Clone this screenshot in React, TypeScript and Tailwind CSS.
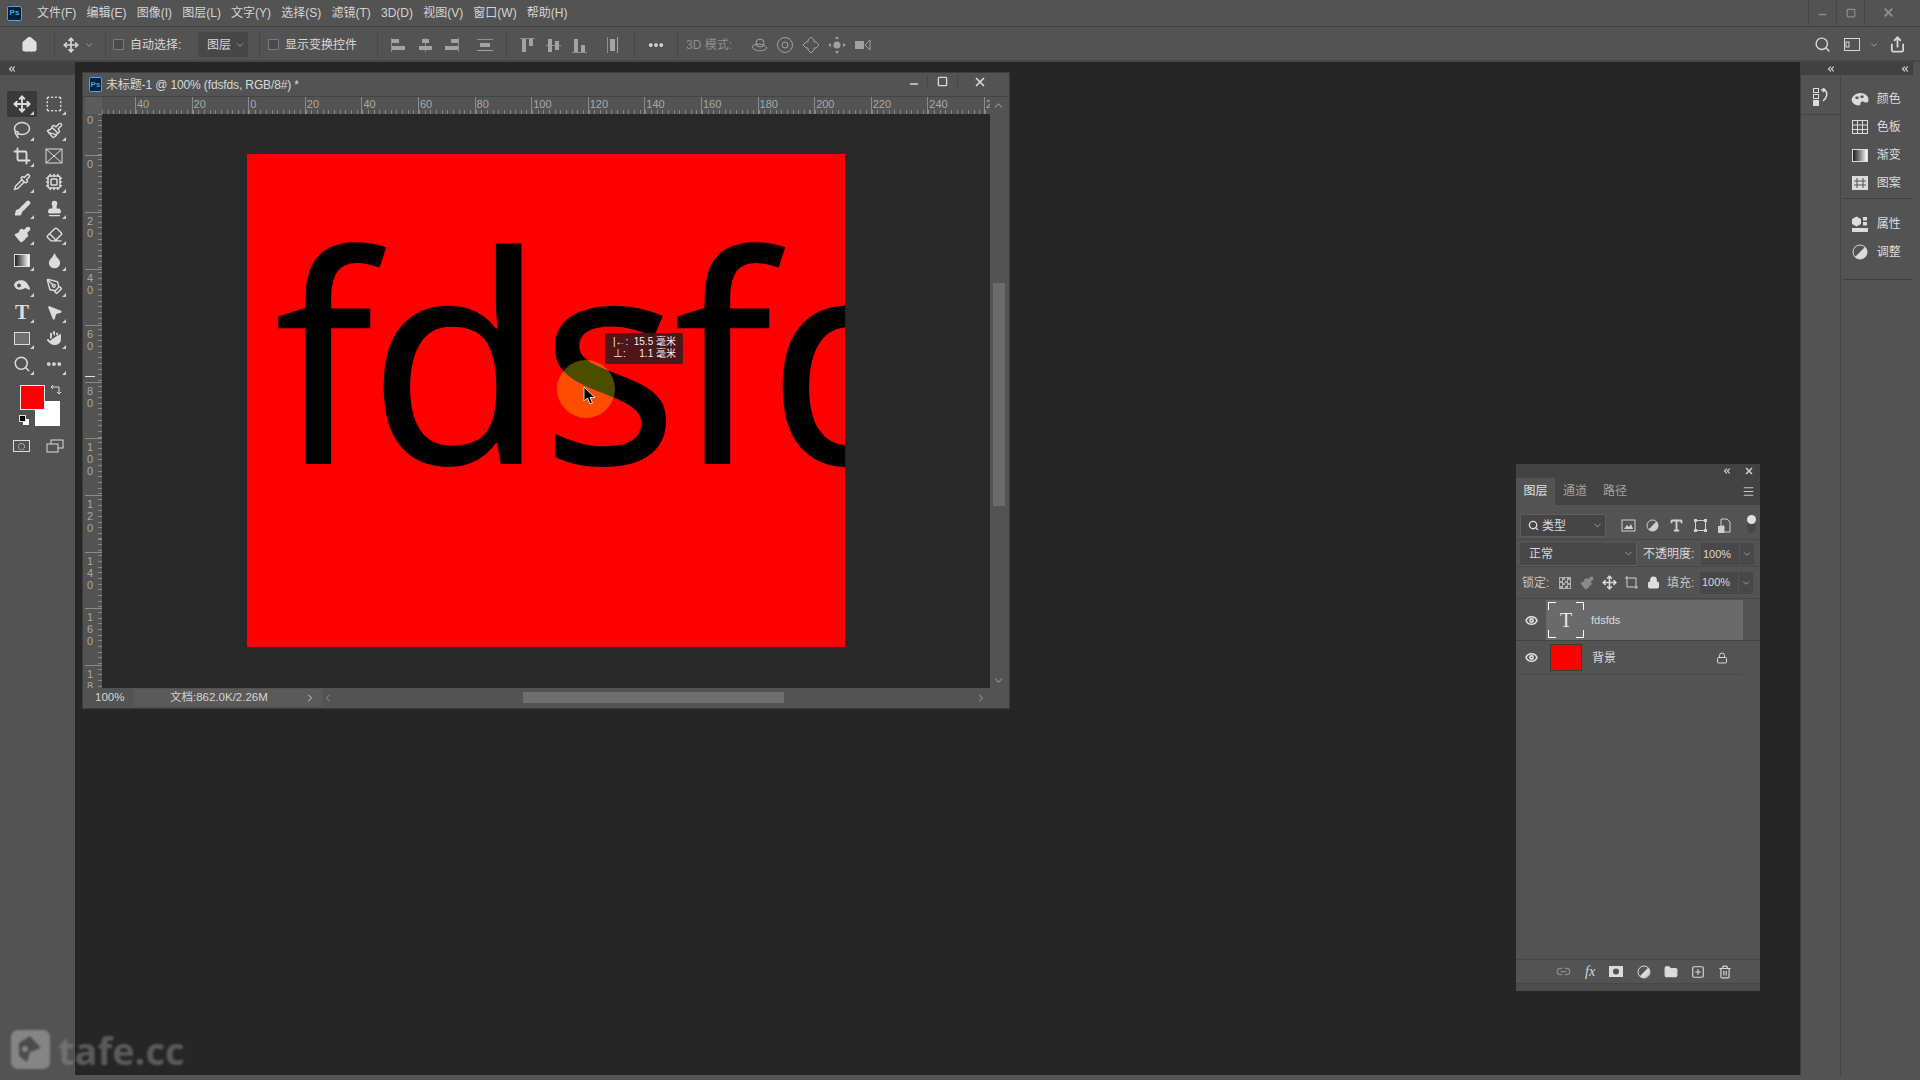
import React from 'react';
import {
  Brush, Crop, Cpu, Droplet, Ellipsis, Eraser, Eye, FolderClosed, Hand, Home, Lasso, Link2, Lock, Menu,
  Move, MousePointer2, PenTool, Pipette, Search, Share, SquareDashed, SquarePlus, Stamp, Trash2, Type, X,
  ChevronDown, ChevronRight, ChevronLeft, ChevronUp, ChevronsLeft, Minus, Square, Paintbrush,
} from 'lucide-react';

const cjk = "font-['Liberation_Sans','Noto_Sans_CJK_SC',sans-serif]";

const menuItems = ['文件(F)', '编辑(E)', '图像(I)', '图层(L)', '文字(Y)', '选择(S)', '滤镜(T)', '3D(D)', '视图(V)', '窗口(W)', '帮助(H)'];
const topRulerLabels = ['40', '20', '0', '20', '40', '60', '80', '100', '120', '140', '160', '180', '200', '220', '240', '2'];
const sideRulerLabels = ['20', '40', '60', '80', '100', '120', '140', '160', '180'];

function PsLogo({ size = 'w-[15px] h-[15px]' }: { size?: string }) {
  return (
    <div className={`${size} bg-[#001e36] border border-[#31a8ff] rounded-[2px] flex items-center justify-center text-[8px] leading-none font-bold text-[#31a8ff]`}>
      Ps
    </div>
  );
}

function Sep({ className = '' }: { className?: string }) {
  return <div className={`w-px h-[25px] bg-[#474747] ${className}`} />;
}

// align icons in the options bar: 16x16 with bars
function AlignIcon({ bars, line }: { bars: number[][]; line: number[] }) {
  return (
    <svg width="18" height="18" viewBox="0 0 18 18" className="shrink-0">
      <rect x={line[0]} y={line[1]} width={line[2]} height={line[3]} fill="#8f8f8f" />
      {bars.map((b, i) => (
        <rect key={i} x={b[0]} y={b[1]} width={b[2]} height={b[3]} fill="#a3a3a3" />
      ))}
    </svg>
  );
}

function Corner() {
  return (
    <svg width="4" height="4" viewBox="0 0 4 4" className="absolute right-[3px] bottom-[2px]">
      <path d="M4 0V4H0Z" fill="#cfcfcf" />
    </svg>
  );
}

function Tool({ children, active, corner = true }: { children: React.ReactNode; active?: boolean; corner?: boolean }) {
  return (
    <div className={`relative w-[30px] h-[26px] flex items-center justify-center text-[#dcdcdc] ${active ? 'bg-[#3a3a3a]' : ''}`}>
      {children}
      {corner && <Corner />}
    </div>
  );
}

function TopRuler() {
  return (
    <div className="h-[17px] flex flex-1 overflow-hidden bg-[#535353] bg-[repeating-linear-gradient(90deg,#858585_0,#858585_1px,transparent_1px,transparent_5.66px)] bg-[length:100%_4px] bg-bottom bg-no-repeat">
      <div className="w-[33px] shrink-0" />
      {topRulerLabels.map((label, i) => (
        <div key={i} className="w-[56.6px] shrink-0 border-l border-[#8a8a8a] pl-[1px] text-[11px] leading-[15px] text-[#a8a8a8] font-['Liberation_Sans',sans-serif]">
          {label}
        </div>
      ))}
    </div>
  );
}

function SideRuler() {
  return (
    <div className="relative w-[17px] shrink-0 overflow-hidden bg-[#535353] bg-[repeating-linear-gradient(180deg,#858585_0,#858585_1px,transparent_1px,transparent_5.66px)] bg-[length:4px_100%] bg-right bg-no-repeat">
      <div className="h-[41px] pl-[2px] text-[11px] leading-[12px] text-[#a8a8a8] font-['Liberation_Sans',sans-serif]">0</div>
      <div className="h-[57px] border-t border-[#8a8a8a] pl-[2px] pt-[2px] text-[11px] leading-[12px] text-[#a8a8a8] font-['Liberation_Sans',sans-serif]">0</div>
      {sideRulerLabels.map((label, i) => (
        <div key={i} className="h-[56.6px] border-t border-[#8a8a8a] pl-[2px] pt-[2px] text-[11px] leading-[12px] text-[#a8a8a8] font-['Liberation_Sans',sans-serif]">
          {label.split('').map((d, j) => (
            <div key={j}>{d}</div>
          ))}
        </div>
      ))}
      <div className="absolute left-0 top-[262px] w-[10px] h-px bg-[#e0e0e0]" />
    </div>
  );
}

function DockItem({ icon, label }: { icon: React.ReactNode; label: string }) {
  return (
    <div className="h-[28px] flex items-center text-[#dcdcdc]">
      <div className="w-[34px] flex justify-center">{icon}</div>
      <span className="text-[12px]">{label}</span>
    </div>
  );
}

function DocumentWindow() {
  return (
    <div className={`absolute left-[82px] top-[72px] w-[928px] h-[637px] bg-[#535353] border border-[#3c3c3c] flex flex-col ${cjk}`}>
      {/* title bar */}
      <div className="h-[24px] flex items-center pl-[6px] border-b border-[#434343]">
        <PsLogo size="w-[13px] h-[15px]" />
        <span className="ml-[4px] text-[12px] tracking-[-0.13px] text-[#d8d8d8]">未标题-1 @ 100% (fdsfds, RGB/8#) *</span>
        <div className="ml-auto flex items-center h-[17px] self-start text-[#d6d6d6]">
          <div className="w-[26px] flex justify-center pt-[4px]"><Minus size={12} strokeWidth={3} /></div>
          <div className="w-[30px] flex justify-center border-l border-[#474747]"><Square size={11} strokeWidth={3} /></div>
          <div className="w-[44px] flex justify-center border-l border-[#474747]"><X size={14} strokeWidth={3} /></div>
          <div className="w-[8px]" />
        </div>
      </div>
      <div className="flex flex-1 min-h-0">
        <div className="flex flex-col flex-1 min-w-0 pl-[2px]">
          <div className="flex">
            <div className="w-[17px] h-[17px] bg-[#5c5c5c]" />
            <TopRuler />
          </div>
          <div className="flex flex-1 min-h-0">
            <SideRuler />
            {/* canvas */}
            <div className="flex-1 bg-[#282828] pl-[145px] pt-[40px] overflow-hidden">
              <div className="relative w-[598px] h-[493px] bg-[#ff0000] overflow-hidden">
                <div className="absolute left-[27px] top-[25px] text-[290px] tracking-[-6px] leading-[345px] text-black whitespace-nowrap font-['Noto_Sans',sans-serif]">fdsfd</div>
              </div>
            </div>
          </div>
        </div>
        {/* vertical scrollbar */}
        <div className="w-[19px] shrink-0 flex flex-col items-center text-[#8a8a8a] pt-[2px] pb-[1px] pr-[2px]">
          <ChevronUp size={13} />
          <div className="h-[171px]" />
          <div className="w-[12px] h-[223px] bg-[#6b6b6b]" />
          <div className="flex-1" />
          <ChevronDown size={13} />
        </div>
      </div>
      {/* status bar */}
      <div className="h-[18px] mb-[2px] pt-[1px] flex items-center bg-[#535353] text-[11.5px] text-[#d4d4d4]">
        <span className="ml-[12px] w-[39px]">100%</span>
        <div className="h-full w-[188px] bg-[#5a5a5a] pl-[36px] flex items-center">文档:862.0K/2.26M</div>
        <ChevronRight size={12} className="ml-[-18px]" />
        <ChevronLeft size={12} className="ml-[6px] text-[#8a8a8a]" />
        <div className="ml-[189px] w-[261px] h-[11px] bg-[#6e6e6e]" />
        <div className="flex-1" />
        <ChevronRight size={12} className="mr-[22px] text-[#a0a0a0]" />
      </div>
      {/* cursor readout over the artboard */}
      <div className="absolute left-[474px] top-[287px] w-[58px] h-[58px] rounded-full bg-[#ffff00]/30" />
      <svg width="14" height="20" viewBox="0 0 14 20" className="absolute left-[500px] top-[313px]">
        <path d="M1 1V15L4.5 12L7 18L9.5 17L7 11.5H12Z" fill="#000" stroke="#fff" strokeWidth="0.8" />
      </svg>
      <div className="absolute left-[522px] top-[260px] w-[78px] h-[31px] rounded-[2px] bg-[#3b1818]/90 text-[10px] leading-[12px] text-[#f0f0f0] pl-[8px] pr-[7px] pt-[3px]">
        <div className="flex justify-between"><span>|←:</span><span>15.5 毫米</span></div>
        <div className="flex justify-between"><span>⊥:</span><span>1.1 毫米</span></div>
      </div>
    </div>
  );
}

function LayersPanel() {
  const iconClass = 'text-[#d0d0d0]';
  return (
    <div className={`absolute left-[1516px] top-[464px] w-[244px] h-[527px] bg-[#535353] flex flex-col ${cjk}`}>
      <div className="h-[14px] bg-[#424242] flex items-center justify-end gap-[12px] pr-[6px] text-[#c8c8c8]">
        <ChevronsLeft size={10} strokeWidth={3} />
        <X size={10} strokeWidth={4} />
      </div>
      <div className="h-[27px] bg-[#434343] flex items-center text-[12px] text-[#a2a2a2] pr-[5px]">
        <div className="w-[39px] h-full pb-[2px] bg-[#535353] flex items-center justify-center text-[#e0e0e0]">图层</div>
        <div className="w-[40px] pb-[2px] text-center">通道</div>
        <div className="w-[40px] pb-[2px] text-center">路径</div>
        <Menu size={13} className="ml-auto text-[#c8c8c8]" />
      </div>
      {/* filter */}
      <div className="h-[35px] flex items-center pl-[4px] pt-[7px] border-b border-[#484848]">
        <div className="w-[86px] h-[23px] bg-[#454545] border border-[#5e5e5e] rounded-[1px] flex items-center pl-[7px] text-[12px] text-[#dcdcdc]">
          <Search size={11} strokeWidth={3} />
          <span className="ml-[3px]">类型</span>
          <ChevronDown size={11} className="ml-auto mr-[2px] text-[#a0a0a0]" />
        </div>
        <div className={`ml-[15px] flex items-center gap-[9px] ${iconClass}`}>
          <svg width="15" height="13" viewBox="0 0 15 13"><rect x="1" y="1" width="13" height="11" fill="none" stroke="#d0d0d0" /><path d="M3 10L6 6L8 8L10 5L12 10Z" fill="#d0d0d0" /></svg>
          <svg width="15" height="15" viewBox="0 0 15 15"><circle cx="7.5" cy="7.5" r="5.5" fill="#555" stroke="#d0d0d0" /><path d="M11.4 3.6A5.5 5.5 0 0 1 3.6 11.4Z" fill="#d0d0d0" /></svg>
          <Type size={15} strokeWidth={3} />
          <svg width="15" height="15" viewBox="0 0 15 15"><rect x="2.5" y="2.5" width="10" height="10" fill="none" stroke="#d0d0d0" /><rect x="1" y="1" width="3" height="3" fill="#d0d0d0" /><rect x="11" y="1" width="3" height="3" fill="#d0d0d0" /><rect x="1" y="11" width="3" height="3" fill="#d0d0d0" /><rect x="11" y="11" width="3" height="3" fill="#d0d0d0" /></svg>
          <svg width="14" height="16" viewBox="0 0 14 16"><path d="M4 1H10L13 4V14H7V8H4Z" fill="none" stroke="#d0d0d0" /><rect x="1" y="8" width="6" height="7" fill="#d0d0d0" /></svg>
        </div>
        <div className="ml-[16px] mb-[4px] flex flex-col items-center">
          <div className="w-[9px] h-[9px] rounded-full bg-[#e0e0e0]" />
          <div className="w-[9px] h-[9px] rounded-b-full bg-[#474747]" />
        </div>
      </div>
      {/* blend mode */}
      <div className="h-[27px] flex items-center pl-[4px] pt-[2px] border-b border-[#484848] text-[12px] text-[#d8d8d8]">
        <div className="w-[117px] h-[23px] bg-[#484848] border-b border-r border-[#5e5e5e] flex items-center pl-[9px]">
          正常
          <ChevronDown size={11} className="ml-auto mr-[2px] text-[#a0a0a0]" />
        </div>
        <span className="ml-[6px] w-[58px] whitespace-nowrap">不透明度:</span>
        <div className="w-[38px] h-[22px] bg-[#484848] flex items-center pl-[2px] text-[11px]">100%</div>
        <div className="ml-[1px] w-[14px] h-[22px] bg-[#484848] flex items-center justify-center"><ChevronDown size={10} className="text-[#a8a8a8]" /></div>
      </div>
      {/* lock */}
      <div className="h-[32px] flex items-center pl-[6px] border-b border-[#484848] text-[12px] text-[#c4c4c4]">
        <span className="w-[37px]">锁定:</span>
        <div className="w-[12px] h-[12px] border border-[#b0b0b0] bg-[repeating-conic-gradient(#b0b0b0_0_25%,#555_0_50%)] bg-[length:5px_5px]" />
        <Paintbrush size={14} className="ml-[9px] text-[#8a8a8a]" fill="#8a8a8a" />
        <Move size={15} className="ml-[8px] text-[#d8d8d8]" strokeWidth={2.5} />
        <svg width="15" height="15" viewBox="0 0 15 15" className="ml-[7px]"><path d="M3 1V12H14M1 3H12V14" fill="none" stroke="#d0d0d0" /></svg>
        <Lock size={13} className="ml-[8px] text-[#e0e0e0]" fill="#e0e0e0" />
        <span className="ml-[7px] w-[33px]">填充:</span>
        <div className="w-[38px] h-[22px] bg-[#484848] flex items-center pl-[2px] text-[11px] text-[#d8d8d8]">100%</div>
        <div className="ml-[1px] w-[14px] h-[22px] bg-[#484848] flex items-center justify-center"><ChevronDown size={10} className="text-[#a8a8a8]" /></div>
      </div>
      {/* layer rows */}
      <div className="h-[41px] flex items-center border-b border-[#434343] mt-[1px]">
        <div className="w-[30px] flex justify-center"><Eye size={13} strokeWidth={3} className="text-[#e0e0e0]" /></div>
        <div className="w-[197px] h-full bg-[#6a6a6a] flex items-center pl-[2px]">
          <div className="relative w-[36px] h-[36px] flex items-center justify-center text-[#e8e8e8]">
            <div className="absolute left-0 top-0 w-[8px] h-[8px] border-l border-t border-white" />
            <div className="absolute right-0 top-0 w-[8px] h-[8px] border-r border-t border-white" />
            <div className="absolute left-0 bottom-0 w-[8px] h-[8px] border-l border-b border-white" />
            <div className="absolute right-0 bottom-0 w-[8px] h-[8px] border-r border-b border-white" />
            <span className="text-[20px] font-['Liberation_Serif',serif] leading-none">T</span>
          </div>
          <span className="ml-[7px] text-[11px] text-[#dcdcdc]">fdsfds</span>
        </div>
      </div>
      <div className="h-[34px] flex items-center border-b border-[#4a4a4a] w-[227px]">
        <div className="w-[30px] flex justify-center"><Eye size={13} strokeWidth={3} className="text-[#e0e0e0]" /></div>
        <div className="w-[32px] h-[27px] ml-[4px] bg-[#ff0000] border border-[#3a3a3a]" />
        <span className="ml-[10px] text-[12px] text-[#dcdcdc]">背景</span>
        <Lock size={12} className="ml-auto mr-[15px] text-[#d8d8d8]" />
      </div>
      <div className="flex-1" />
      {/* footer */}
      <div className="h-[24px] border-t border-[#474747] flex items-center pl-[40px] text-[#d8d8d8]">
        <Link2 size={15} className="text-[#8a8a8a]" />
        <span className="ml-[14px] w-[24px] text-[14px] italic font-['Liberation_Serif',serif]">fx</span>
        <svg width="14" height="11" viewBox="0 0 14 11"><path fillRule="evenodd" d="M0 0H14V11H0ZM7 2.5A3 3 0 1 0 7 8.5A3 3 0 1 0 7 2.5Z" fill="#dcdcdc" /></svg>
        <svg width="14" height="14" viewBox="0 0 14 14" className="ml-[14px]"><circle cx="7" cy="7" r="6" fill="#555" stroke="#dcdcdc" /><path d="M11.2 2.8A6 6 0 0 1 2.8 11.2Z" fill="#dcdcdc" /></svg>
        <FolderClosed size={14} fill="#dcdcdc" className="ml-[13px]" />
        <SquarePlus size={14} className="ml-[13px]" />
        <Trash2 size={14} className="ml-[13px]" />
      </div>
      <div className="h-[8px] border-t border-[#474747] bg-[#4c4c4c]" />
    </div>
  );
}

export default function App() {
  return (
    <div className={`relative w-[1920px] h-[1080px] overflow-hidden flex flex-col bg-[#262626] ${cjk}`}>
      {/* menu bar */}
      <div className="h-[27px] shrink-0 bg-[#535353] border-b border-[#404040] flex items-center pl-[7px] text-[12px] text-[#d4d4d4]">
        <PsLogo />
        <div className="ml-[15px] flex gap-[10.2px]">
          {menuItems.map((item) => (
            <span key={item}>{item}</span>
          ))}
        </div>
        <div className="ml-auto flex items-center h-full text-[#8c8c8c] border-b border-[#535353]">
          <div className="w-[28px] flex justify-center border-l border-[#474747] h-full items-center pt-[4px]"><Minus size={11} strokeWidth={3} /></div>
          <div className="w-[28px] flex justify-center border-l border-[#474747] h-full items-center"><Square size={10} strokeWidth={3} /></div>
          <div className="w-[47px] flex justify-center border-l border-[#474747] h-full items-center"><X size={13} strokeWidth={3.5} /></div>
          <div className="w-[9px]" />
        </div>
      </div>
      {/* options bar */}
      <div className="h-[35px] shrink-0 bg-[#535353] border-b-2 border-[#474747] pt-[2px] flex items-center text-[12px] text-[#d8d8d8]">
        <Home size={17} fill="#e0e0e0" className="ml-[21px] text-[#e0e0e0]" />
        <Sep className="ml-[16px]" />
        <Move size={16} className="ml-[8px] text-[#d8d8d8]" strokeWidth={2.5} />
        <ChevronDown size={10} className="ml-[5px] text-[#a8a8a8]" />
        <Sep className="ml-[11px]" />
        <div className="ml-[7px] w-[11px] h-[11px] border border-[#7c7c7c] bg-[#4a4a4a] rounded-[1px]" />
        <span className="ml-[6px] w-[68px] whitespace-nowrap">自动选择:</span>
        <div className="w-[50px] h-[25px] bg-[#474747] flex items-center pl-[9px]">
          图层
          <ChevronDown size={10} className="ml-auto mr-[3px] text-[#a8a8a8]" />
        </div>
        <Sep className="ml-[11px]" />
        <div className="ml-[8px] w-[11px] h-[11px] border border-[#7c7c7c] bg-[#4a4a4a] rounded-[1px]" />
        <span className="ml-[6px] w-[72px] whitespace-nowrap">显示变换控件</span>
        <Sep className="ml-[20px]" />
        <div className="ml-[12px]"><AlignIcon line={[1, 2, 1, 14]} bars={[[2, 3, 7, 4], [2, 10, 13, 4]]} /></div>
        <div className="ml-[9px]"><AlignIcon line={[8, 2, 1, 14]} bars={[[5, 3, 7, 4], [2, 10, 13, 4]]} /></div>
        <div className="ml-[7px]"><AlignIcon line={[16, 2, 1, 14]} bars={[[9, 3, 7, 4], [3, 10, 13, 4]]} /></div>
        <div className="ml-[16px]"><AlignIcon line={[1, 3, 16, 1]} bars={[[4, 7, 10, 4], [1, 14, 16, 1]]} /></div>
        <Sep className="ml-[12px]" />
        <div className="ml-[12px]"><AlignIcon line={[1, 2, 15, 1]} bars={[[3, 3, 4, 13], [10, 3, 4, 7]]} /></div>
        <div className="ml-[8px]"><AlignIcon line={[1, 9, 15, 1]} bars={[[3, 3, 4, 13], [10, 5, 4, 9]]} /></div>
        <div className="ml-[8px]"><AlignIcon line={[1, 16, 15, 1]} bars={[[3, 3, 4, 13], [10, 9, 4, 7]]} /></div>
        <div className="ml-[15px]"><AlignIcon line={[3, 1, 1, 16]} bars={[[6, 3, 5, 12], [13, 1, 1, 16]]} /></div>
        <Sep className="ml-[12px]" />
        <Ellipsis size={18} strokeWidth={3} className="ml-[12px] text-[#e0e0e0]" />
        <Sep className="ml-[12px]" />
        <span className="ml-[8px] w-[52px] text-[#8e8e8e] whitespace-nowrap">3D 模式:</span>
        <div className="ml-[12px] flex items-center gap-[8px] text-[#9c9c9c]">
          <svg width="18" height="18" viewBox="0 0 18 18" fill="none" stroke="#a0a0a0"><circle cx="10" cy="7" r="4" /><path d="M2 11C4 7 14 7 17 12C14 16 5 16 2 11Z" /></svg>
          <svg width="18" height="18" viewBox="0 0 18 18" fill="none" stroke="#a0a0a0"><circle cx="9" cy="9" r="7.5" /><circle cx="9" cy="9" r="3" /></svg>
          <svg width="18" height="18" viewBox="0 0 18 18" fill="none" stroke="#a0a0a0"><path d="M9 1L12 4V6L14 6L17 9L14 12H12V14L9 17L6 14V12H4L1 9L4 6H6V4Z" /></svg>
          <svg width="18" height="18" viewBox="0 0 18 18" fill="#a0a0a0"><circle cx="9" cy="9" r="3.5" /><path d="M9 0L11 3H7ZM9 18L7 15H11ZM0 9L3 7V11ZM18 9L15 11V7Z" /></svg>
          <svg width="18" height="18" viewBox="0 0 18 18" fill="#a0a0a0"><rect x="1" y="5" width="9" height="8" /><path d="M11 9L16 4V14Z" fill="none" stroke="#a0a0a0" /></svg>
        </div>
        <div className="ml-auto flex items-center text-[#d8d8d8]">
          <Search size={17} />
          <svg width="16" height="13" viewBox="0 0 16 13" className="ml-[13px]"><rect x="0.5" y="0.5" width="15" height="12" fill="none" stroke="#d8d8d8" /><rect x="2" y="4" width="3" height="5" fill="none" stroke="#d8d8d8" /></svg>
          <ChevronDown size={10} className="ml-[9px] text-[#a8a8a8]" />
          <Share size={17} strokeWidth={2.5} className="ml-[10px] mr-[14px]" />
        </div>
      </div>

      <div className="flex flex-1 min-h-0">
        {/* tool column */}
        <div className="w-[75px] shrink-0 flex flex-col bg-[#535353]">
          <div className="h-[13px] bg-[#414141] flex items-center pl-[7px] text-[#c8c8c8]"><ChevronsLeft size={10} strokeWidth={3} /></div>
          <div className="grid grid-cols-[30px_30px] gap-x-[2px] pl-[7px] pt-[16px]">
            <Tool active><Move size={18} strokeWidth={2.5} /></Tool>
            <Tool><SquareDashed size={18} /></Tool>
            <Tool><Lasso size={18} /></Tool>
            <Tool><Paintbrush size={17} /></Tool>
            <Tool><Crop size={18} strokeWidth={2.5} /></Tool>
            <Tool corner={false}>
              <svg width="18" height="16" viewBox="0 0 18 16" fill="none" stroke="#dcdcdc"><rect x="1" y="1" width="16" height="14" /><path d="M1 1L17 15M17 1L1 15" /></svg>
            </Tool>
            <Tool><Pipette size={18} /></Tool>
            <Tool><Cpu size={18} /></Tool>
            <Tool><Brush size={17} fill="#dcdcdc" /></Tool>
            <Tool><Stamp size={17} fill="#dcdcdc" /></Tool>
            <Tool><Paintbrush size={17} fill="#dcdcdc" /></Tool>
            <Tool><Eraser size={17} /></Tool>
            <Tool><div className="w-[16px] h-[13px] border border-[#dcdcdc] bg-gradient-to-r from-[#222] to-white" /></Tool>
            <Tool><Droplet size={17} fill="#dcdcdc" /></Tool>
            <Tool>
              <svg width="18" height="14" viewBox="0 0 18 14"><path fillRule="evenodd" d="M1 6C2 1 10 0 13 3C15 5 17 8 17 11L12 9C8 12 2 11 1 6ZM6 4.5A2 2 0 1 0 6 8.5A2 2 0 1 0 6 4.5Z" fill="#dcdcdc" /></svg>
            </Tool>
            <Tool><PenTool size={17} /></Tool>
            <Tool><span className="text-[21px] leading-none font-bold font-['Liberation_Serif',serif]">T</span></Tool>
            <Tool><MousePointer2 size={17} fill="#dcdcdc" /></Tool>
            <Tool><div className="w-[16px] h-[13px] border border-[#dcdcdc] bg-[#707070]" /></Tool>
            <Tool><Hand size={18} fill="#dcdcdc" strokeWidth={1.5} stroke="#535353" /></Tool>
            <Tool><Search size={18} /></Tool>
            <Tool><Ellipsis size={18} strokeWidth={3} /></Tool>
          </div>
          {/* colour swatches */}
          <div className="relative h-[48px] mt-[8px]">
            <div className="absolute left-[35px] top-[16px] w-[25px] h-[25px] bg-white" />
            <div className="absolute left-[20px] top-0 w-[25px] h-[25px] bg-[#ff0000] border border-[#e8e8e8]" />
            <svg width="12" height="12" viewBox="0 0 12 12" className="absolute left-[50px] top-[-1px]" fill="none" stroke="#dcdcdc"><path d="M1 3H9V10M1 3L3 1M1 3L3 5M9 10L7 8M9 10L11 8" /></svg>
            <div className="absolute left-[23px] top-[34px] w-[6px] h-[6px] bg-white" />
            <div className="absolute left-[19px] top-[30px] w-[7px] h-[7px] bg-black border border-[#e0e0e0]" />
          </div>
          <div className="flex items-center mt-[6px]">
            <div className="ml-[13px] w-[17px] h-[12px] border border-[#dcdcdc] flex items-center justify-center">
              <div className="w-[7px] h-[7px] rounded-full border border-dotted border-[#dcdcdc]" />
            </div>
            <svg width="18" height="14" viewBox="0 0 18 14" fill="none" stroke="#dcdcdc" className="ml-[16px]"><rect x="5" y="1" width="12" height="8" /><rect x="1" y="5" width="11" height="8" fill="#535353" /></svg>
          </div>
        </div>

        <div className="flex-1" />

        {/* right dock */}
        <div className="w-[120px] shrink-0 flex flex-col bg-[#535353] border-l border-[#3f3f3f]">
          <div className="h-[13px] flex items-center justify-between bg-[#414141] mr-[7px] pl-[25px] pr-[3px] text-[#c8c8c8]">
            <ChevronsLeft size={10} strokeWidth={3} />
            <ChevronsLeft size={10} strokeWidth={3} />
          </div>
          <div className="flex flex-1">
            <div className="w-[40px] border-r border-[#434343]">
              <div className="h-[40px] border-b border-[#434343] flex items-center justify-center pt-[4px] pl-[2px]">
                <svg width="18" height="18" viewBox="0 0 18 18" fill="none" stroke="#dcdcdc">
                  <rect x="1.5" y="0.5" width="5" height="4" />
                  <rect x="1.5" y="6.5" width="5" height="4" />
                  <rect x="1.5" y="12.5" width="5" height="5" fill="#dcdcdc" />
                  <path d="M9 2H13C16 5 15 10 11 13M13 2L11 0M13 2L11 4" strokeWidth="1.5" />
                </svg>
              </div>
            </div>
            <div className="ml-[2px] w-[71px] flex flex-col">
              <div className="pt-[10px] h-[124px] border-b border-[#3f3f3f]">
                <DockItem label="颜色" icon={
                  <svg width="18" height="15" viewBox="0 0 18 15"><path fillRule="evenodd" d="M9 1C14 1 17.5 4 17.5 7.5C17.5 11 15 11 13 10C11 9 9 10 9.5 12C10 14 5 14 2.5 11.5C0 9 0 6 3 3.5C4.5 2 7 1 9 1ZM6 4.5A1.3 1.3 0 1 0 6 7A1.3 1.3 0 1 0 6 4.5ZM11 3.5A1.3 1.3 0 1 0 11 6A1.3 1.3 0 1 0 11 3.5Z" fill="#dcdcdc" /></svg>
                } />
                <DockItem label="色板" icon={
                  <svg width="16" height="14" viewBox="0 0 16 14" fill="none" stroke="#dcdcdc"><rect x="0.5" y="0.5" width="15" height="13" /><path d="M5.5 0V14M10.5 0V14M0 5H16M0 9.5H16" /></svg>
                } />
                <DockItem label="渐变" icon={<div className="w-[16px] h-[13px] border border-[#dcdcdc] bg-gradient-to-r from-[#222] to-white" />} />
                <DockItem label="图案" icon={
                  <svg width="16" height="14" viewBox="0 0 16 14"><rect width="16" height="14" fill="#dcdcdc" /><path d="M5 2V12M11 2V12M2 5H14M2 9H14" stroke="#535353" fill="none" /></svg>
                } />
              </div>
              <div className="pt-[11px] h-[69px] border-b border-[#3f3f3f] box-content">
                <DockItem label="属性" icon={
                  <svg width="16" height="17" viewBox="0 0 16 17" fill="#dcdcdc"><path d="M0 3L4.5 0.5L9 3V8L4.5 10.5L0 8Z" /><rect x="11" y="1" width="4" height="3.5" /><rect x="11" y="6" width="4" height="3.5" /><rect y="12" width="16" height="4" /></svg>
                } />
                <DockItem label="调整" icon={
                  <svg width="16" height="16" viewBox="0 0 16 16"><circle cx="8" cy="8" r="7" fill="#535353" stroke="#dcdcdc" /><path d="M13 3A7 7 0 0 1 3 13Z" fill="#dcdcdc" /></svg>
                } />
              </div>
            </div>
            <div className="w-[7px]" />
          </div>
        </div>
      </div>

      <div className="h-[5px] shrink-0 bg-[#535353]" />

      <DocumentWindow />
      <LayersPanel />

      {/* watermark */}
      <div className="absolute left-[11px] top-[1030px] flex items-center opacity-50 blur-[1px]">
        <svg width="39" height="39" viewBox="0 0 39 39">
          <rect width="39" height="39" rx="7" fill="#b8b8b8" />
          <path d="M8 13L19 6L30 18L19 22L16 32L8 26Z" fill="#444" />
          <circle cx="14" cy="19" r="3" fill="#b8b8b8" />
        </svg>
        <span className="ml-[8px] text-[38px] leading-none font-bold text-[#8f8f8f] font-['Open_Sans',sans-serif]">tafe.cc</span>
      </div>
    </div>
  );
}
